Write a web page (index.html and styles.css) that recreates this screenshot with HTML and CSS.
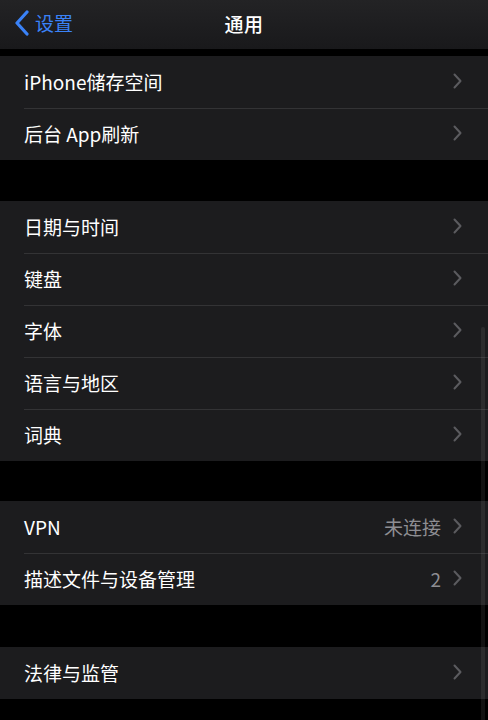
FILE: index.html
```html
<!DOCTYPE html>
<html lang="zh-CN">
<head>
    <meta charset="UTF-8">
    <meta name="viewport" content="width=device-width, initial-scale=1.0">
    <title>通用</title>
    <link rel="stylesheet" href="styles.css">
</head>
<body>
<div class="nav">
    <a class="back">
        <svg class="back-icon" width="16" height="26" viewBox="0 0 16 26">
            <path d="M13 2 L3 13 L13 24" fill="none" stroke="#3a82f7" stroke-width="3.2" stroke-linecap="round" stroke-linejoin="round"/>
        </svg>
        <span>设置</span>
    </a>
    <div class="title">通用</div>
</div>

<div class="page">
    <div class="group first">
        <div class="row"><span class="label">iPhone储存空间</span><svg class="chev" viewBox="0 0 9 16"><path d="M1.5 1.5 L7.5 8 L1.5 14.5"/></svg></div>
        <div class="row"><span class="label">后台 App刷新</span><svg class="chev" viewBox="0 0 9 16"><path d="M1.5 1.5 L7.5 8 L1.5 14.5"/></svg></div>
    </div>

    <div class="group">
        <div class="row"><span class="label">日期与时间</span><svg class="chev" viewBox="0 0 9 16"><path d="M1.5 1.5 L7.5 8 L1.5 14.5"/></svg></div>
        <div class="row"><span class="label">键盘</span><svg class="chev" viewBox="0 0 9 16"><path d="M1.5 1.5 L7.5 8 L1.5 14.5"/></svg></div>
        <div class="row"><span class="label">字体</span><svg class="chev" viewBox="0 0 9 16"><path d="M1.5 1.5 L7.5 8 L1.5 14.5"/></svg></div>
        <div class="row"><span class="label">语言与地区</span><svg class="chev" viewBox="0 0 9 16"><path d="M1.5 1.5 L7.5 8 L1.5 14.5"/></svg></div>
        <div class="row"><span class="label">词典</span><svg class="chev" viewBox="0 0 9 16"><path d="M1.5 1.5 L7.5 8 L1.5 14.5"/></svg></div>
    </div>

    <div class="group mid">
        <div class="row"><span class="label">VPN</span><span class="value">未连接</span><svg class="chev" viewBox="0 0 9 16"><path d="M1.5 1.5 L7.5 8 L1.5 14.5"/></svg></div>
        <div class="row"><span class="label">描述文件与设备管理</span><span class="value">2</span><svg class="chev" viewBox="0 0 9 16"><path d="M1.5 1.5 L7.5 8 L1.5 14.5"/></svg></div>
    </div>

    <div class="group last">
        <div class="row"><span class="label">法律与监管</span><svg class="chev" viewBox="0 0 9 16"><path d="M1.5 1.5 L7.5 8 L1.5 14.5"/></svg></div>
    </div>

    <div class="scroller"></div>
</div>
</body>
</html>
```

FILE: styles.css
```css
html, body {
    width: 100%;
    height: 100%;
}

body {
    margin: 0;
    padding: 0;
    background: #000;
    color: #fff;
    font-family: "Noto Sans CJK SC", "Noto Sans", sans-serif;
    overflow: hidden;
}

.nav {
    height: 49px;
    position: relative;
    display: flex;
    align-items: center;
    justify-content: center;
    background: linear-gradient(#232325, #19191b);
}

.back {
    position: absolute;
    left: 14px;
    top: 10px;
    display: flex;
    align-items: center;
    gap: 5px;
    color: #3a82f7;
    font-size: 19px;
}

.back span {
    line-height: 26px;
}

.title {
    font-size: 19px;
    font-weight: 500;
    letter-spacing: 0.5px;
    margin-top: -2px;
}

.page {
    position: relative;
    height: 671px;
}

.group {
    background: #1c1c1e;
    margin-top: 41px;
}

.group.first {
    margin-top: 7px;
}

.group.mid {
    margin-top: 40px;
}

.group.last {
    margin-top: 42px;
}

.row {
    height: 52px;
    display: flex;
    align-items: center;
    padding-left: 24px;
    padding-right: 26px;
    position: relative;
    font-size: 19px;
}

.row + .row::before {
    content: "";
    position: absolute;
    left: 24px;
    right: 0;
    top: 0;
    height: 1px;
    background: #333335;
}

.label {
    flex: 1;
    white-space: pre;
    margin-top: -2px;
}

.value {
    color: #8e8e93;
    margin-right: 12px;
    margin-top: -2px;
}

.chev {
    width: 9px;
    height: 16px;
    fill: none;
    stroke: #5b5b5f;
    stroke-width: 2;
    stroke-linecap: round;
    stroke-linejoin: round;
    margin-top: -2px;
}

.scroller {
    position: absolute;
    right: 3px;
    top: 271px;
    bottom: 0;
    width: 4px;
    border-radius: 2px 2px 0 0;
    background: rgba(255, 255, 255, 0.07);
}
```
